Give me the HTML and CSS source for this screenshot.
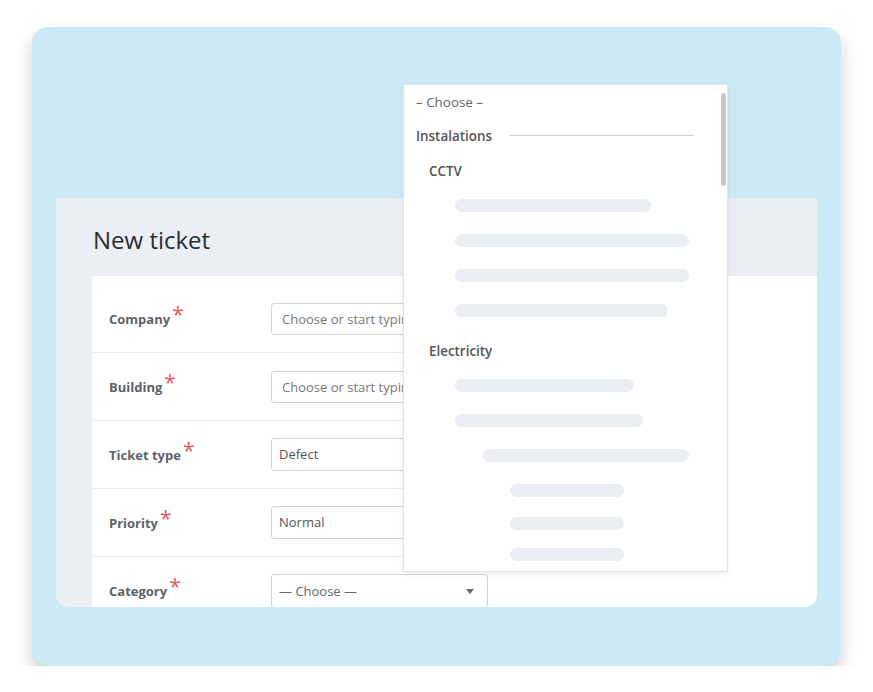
FILE: index.html
```html
<!DOCTYPE html>
<html lang="en">
<head>
<meta charset="UTF-8" />
<meta name="viewport" content="width=device-width, initial-scale=1.0" />
<title>New ticket</title>
<link rel="stylesheet" href="styles.css">
</head>
<body>

<div class="frame">
  <div class="panel">
    <h1 class="panel-title">New ticket</h1>

    <form class="ticket-form">
      <div class="form-row">
        <label class="form-label">Company<span class="req">*</span></label>
        <div class="field">Choose or start typing</div>
      </div>
      <div class="form-row">
        <label class="form-label">Building<span class="req">*</span></label>
        <div class="field">Choose or start typing</div>
      </div>
      <div class="form-row">
        <label class="form-label">Ticket type<span class="req">*</span></label>
        <div class="field field-value">Defect</div>
      </div>
      <div class="form-row">
        <label class="form-label">Priority<span class="req">*</span></label>
        <div class="field field-value">Normal</div>
      </div>
      <div class="form-row">
        <label class="form-label">Category<span class="req">*</span></label>
        <div class="field field-select">&mdash; Choose &mdash;<span class="caret"></span></div>
      </div>
    </form>
  </div>

  <!-- open category list -->
  <div class="dropdown">
    <div class="dd-row dd-first">&ndash; Choose &ndash;</div>
    <div class="dd-row dd-group">Instalations<span class="dd-rule"></span></div>
    <div class="dd-row dd-sub">CCTV</div>
    <div class="dd-row lvl-1"><span class="bar" style="width:196px"></span></div>
    <div class="dd-row lvl-1"><span class="bar" style="width:234px"></span></div>
    <div class="dd-row lvl-1"><span class="bar" style="width:234px"></span></div>
    <div class="dd-row lvl-1"><span class="bar" style="width:213px"></span></div>
    <div class="dd-row dd-sub dd-gap">Electricity</div>
    <div class="dd-row lvl-1"><span class="bar" style="width:179px"></span></div>
    <div class="dd-row lvl-1"><span class="bar" style="width:188px"></span></div>
    <div class="dd-row lvl-2"><span class="bar" style="width:206px"></span></div>
    <div class="dd-row lvl-3"><span class="bar" style="width:114px"></span></div>
    <div class="dd-row dd-short lvl-3"><span class="bar" style="width:114px"></span></div>
    <div class="dd-row dd-short lvl-3"><span class="bar" style="width:114px"></span></div>
    <div class="scrollbar"></div>
  </div>
</div>

</body>
</html>
```

FILE: styles.css
```css
body {
  margin: 0;
  background: #fff;
  font-family: 'Open Sans', 'Liberation Sans', sans-serif;
}

.frame {
  position: relative;
  box-sizing: border-box;
  width: 809px;
  height: 639px;
  margin: 27px 0 0 32px;
  padding: 171px 24px 0 24px;
  background: #cbeaf5;
  border-radius: 16px;
  box-shadow: 0 9px 18px rgba(0,0,0,0.2);
}

.panel {
  height: 409px;
  background: #ebeef3;
  border-radius: 2px 2px 12px 12px;
  overflow: hidden;
}

.panel-title {
  box-sizing: border-box;
  height: 78px;
  margin: 0;
  padding: 26px 0 0 37px;
  font-size: 24px;
  line-height: 32px;
  font-weight: 400;
  color: #2a2e33;
}

.ticket-form {
  box-sizing: border-box;
  height: 331px;
  margin: 0 0 0 36px;
  padding-top: 9px;
  background: #fff;
  border-radius: 2px 0 0 0;
  overflow: hidden;
}

.form-row {
  box-sizing: border-box;
  display: flex;
  align-items: center;
  width: 508px;
  height: 68px;
  padding-left: 17px;
  border-bottom: 1px solid #e8ebef;
}

.form-label {
  width: 162px;
  flex-shrink: 0;
  font-size: 13px;
  line-height: 18px;
  font-weight: 700;
  color: #5e6267;
}

.req {
  margin-left: 2px;
  font-size: 21px;
  line-height: 0;
  font-weight: 400;
  color: #e25c5c;
  vertical-align: 2px;
}

.field {
  position: relative;
  box-sizing: border-box;
  width: 217px;
  height: 32px;
  padding: 0 10px;
  border: 1px solid #d2d4d7;
  border-radius: 3px;
  font-size: 13px;
  line-height: 30px;
  color: #777;
  white-space: nowrap;
  overflow: hidden;
}

.field-value {
  height: 33px;
  padding-left: 7px;
  line-height: 31px;
  color: #555;
}

.field-select {
  height: 34px;
  padding-left: 7px;
  line-height: 32px;
  color: #666;
}

.caret {
  position: absolute;
  right: 13px;
  top: 14px;
  border-left: 4px solid transparent;
  border-right: 4px solid transparent;
  border-top: 5px solid #666;
}

.dropdown {
  position: absolute;
  left: 371px;
  top: 57px;
  box-sizing: border-box;
  width: 325px;
  height: 488px;
  padding-left: 12px;
  background: #fff;
  border: 1px solid #e3e3e3;
  box-shadow: 0 2px 6px rgba(0,0,0,0.07);
  overflow: hidden;
}

.dd-row {
  display: flex;
  align-items: center;
  height: 35px;
  font-size: 13.4px;
  color: #555;
}

.dd-first {
  height: 33px;
  color: #666;
}

.dd-group {
  font-weight: 600;
}

.dd-rule {
  width: 185px;
  height: 1px;
  margin-left: 17px;
  background: #cfd1d3;
}

.dd-sub {
  padding-left: 13px;
  font-weight: 600;
}

.dd-gap {
  margin-top: 5px;
}

.dd-short {
  height: 31px;
}

.lvl-1 { padding-left: 39px; }
.lvl-2 { padding-left: 67px; }
.lvl-3 { padding-left: 94px; }

.bar {
  height: 13px;
  border-radius: 7px;
  background: #eaedf1;
}

.scrollbar {
  position: absolute;
  top: 8px;
  right: 1px;
  width: 5px;
  height: 93px;
  border-radius: 3px;
  background: #c7c7c7;
}
```
